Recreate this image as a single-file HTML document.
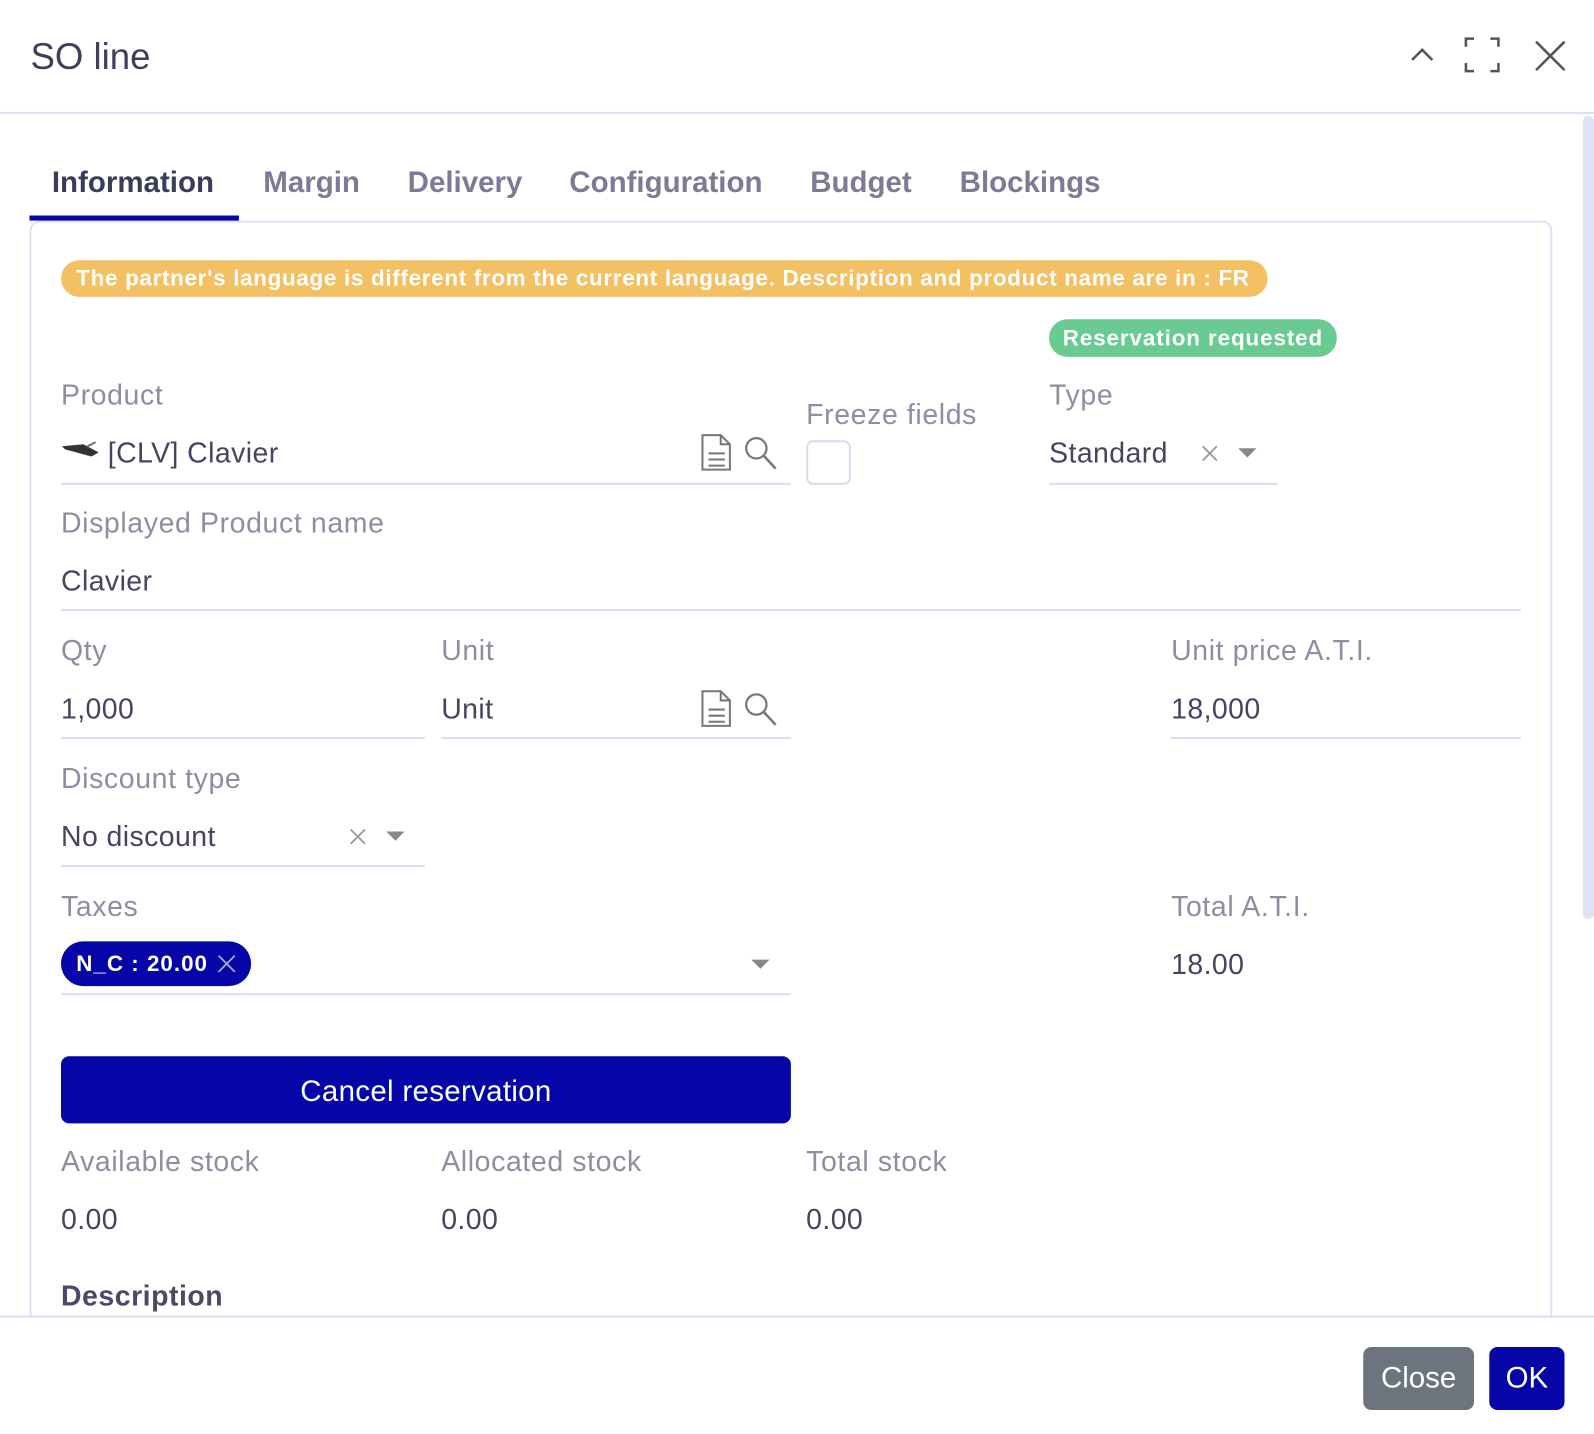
<!DOCTYPE html>
<html><head><meta charset="utf-8"><style>
*{margin:0;padding:0;box-sizing:border-box}
html,body{width:1594px;height:1434px;overflow:hidden;background:#fff}
#w{position:absolute;left:0;top:0;width:1568px;height:1411px;transform:scale(1.01658);transform-origin:0 0;font-family:"Liberation Sans",sans-serif;color:#45455f}
.a{position:absolute;white-space:nowrap;line-height:36px;height:36px}
.lbl{font-size:28px;color:#8e8ea3;letter-spacing:0.6px}
.val{font-size:28px;color:#45455f;letter-spacing:0.4px}
.tab{font-size:29px;font-weight:bold;color:#7b7b96;top:162px}
.ul{position:absolute;height:2px;background:#dcdcf2}
svg{position:absolute}
</style></head><body><div id="w">
<div class="a" style="left:30px;top:36px;font-size:36px;color:#3f3f5c;line-height:40px;height:40px">SO line</div>
<svg style="left:1386px;top:44px" width="28" height="20" viewBox="0 0 28 20"><path d="M3 15 L13 5 L23 15" fill="none" stroke="#555" stroke-width="2.5"/></svg>
<svg style="left:1440px;top:36px" width="36" height="36" viewBox="0 0 36 36"><path d="M2 10V2h8M26 2h8v8M34 26v8h-8M10 34H2v-8" fill="none" stroke="#555" stroke-width="2.5"/></svg>
<svg style="left:1508px;top:38px" width="34" height="34" viewBox="0 0 34 34"><path d="M3 3L31 31M31 3L3 31" fill="none" stroke="#555" stroke-width="2.5"/></svg>
<div style="position:absolute;left:0;top:110px;width:1568px;height:2px;background:#dedef5"></div>
<div style="position:absolute;left:1557px;top:114px;width:11px;height:790px;background:#e2e2f6;border-radius:6px"></div>

<div class="a tab" style="left:51px;color:#3b3b5a">Information</div>
<div class="a tab" style="left:259px">Margin</div>
<div class="a tab" style="left:401px">Delivery</div>
<div class="a tab" style="left:560px">Configuration</div>
<div class="a tab" style="left:797px">Budget</div>
<div class="a tab" style="left:944px">Blockings</div>
<div style="position:absolute;left:29px;top:217px;width:1498px;height:1100px;border:2px solid #e0e0f3;border-radius:10px"></div>
<div style="position:absolute;left:29px;top:212px;width:206px;height:5px;background:#0505a8"></div>

<div class="a" style="left:60px;top:256px;width:1187px;height:36px;background:#f4c064;border-radius:18px;color:#fff;font-weight:bold;font-size:22px;letter-spacing:0.7px;padding-left:15px">The partner's language is different from the current language. Description and product name are in : FR</div>
<div class="a" style="left:1032px;top:314px;width:283px;height:37px;background:#6acb92;border-radius:18px;color:#fff;font-weight:bold;font-size:22px;letter-spacing:0.9px;text-align:center;line-height:37px">Reservation requested</div>

<div class="a lbl" style="left:60px;top:371px">Product</div>
<svg style="left:60px;top:433px" width="38" height="20" viewBox="0 0 38 20"><path d="M1 6 L22 4 L37 12 L30 16 L4 9Z" fill="#333"/><path d="M26 6 L34 2" stroke="#777" stroke-width="2"/></svg>
<div class="a val" style="left:106px;top:428px">[CLV] Clavier</div>
<svg style="left:688px;top:426px" width="34" height="38" viewBox="0 0 34 38"><path d="M3 2h18l9 9v25H3z M21 2v9h9 M9 20h16M9 26h16M9 32h16" fill="none" stroke="#777" stroke-width="2"/></svg>
<svg style="left:730px;top:428px" width="36" height="36" viewBox="0 0 36 36"><circle cx="14" cy="13" r="10" fill="none" stroke="#777" stroke-width="2.2"/><path d="M21 20L33 33" stroke="#777" stroke-width="2.5"/></svg>
<div class="ul" style="left:60px;top:475px;width:718px"></div>
<div class="a lbl" style="left:793px;top:390px">Freeze fields</div>
<div style="position:absolute;left:793px;top:433px;width:44px;height:44px;border:2px solid #dcdcf0;border-radius:7px"></div>
<div class="a lbl" style="left:1032px;top:371px">Type</div>
<div class="a val" style="left:1032px;top:428px">Standard</div>
<svg style="left:1181px;top:437px" width="18" height="18" viewBox="0 0 18 18"><path d="M2 2L16 16M16 2L2 16" stroke="#999" stroke-width="1.8"/></svg>
<svg style="left:1217px;top:440px" width="20" height="12" viewBox="0 0 20 12"><path d="M1 1h18L10 10z" fill="#888"/></svg>
<div class="ul" style="left:1032px;top:475px;width:225px"></div>

<div class="a lbl" style="left:60px;top:497px">Displayed Product name</div>
<div class="a val" style="left:60px;top:554px">Clavier</div>
<div class="ul" style="left:60px;top:599px;width:1436px"></div>

<div class="a lbl" style="left:60px;top:622px">Qty</div>
<div class="a val" style="left:60px;top:680px">1,000</div>
<div class="ul" style="left:60px;top:725px;width:358px"></div>
<div class="a lbl" style="left:434px;top:622px">Unit</div>
<div class="a val" style="left:434px;top:680px">Unit</div>
<svg style="left:688px;top:678px" width="34" height="38" viewBox="0 0 34 38"><path d="M3 2h18l9 9v25H3z M21 2v9h9 M9 20h16M9 26h16M9 32h16" fill="none" stroke="#777" stroke-width="2"/></svg>
<svg style="left:730px;top:680px" width="36" height="36" viewBox="0 0 36 36"><circle cx="14" cy="13" r="10" fill="none" stroke="#777" stroke-width="2.2"/><path d="M21 20L33 33" stroke="#777" stroke-width="2.5"/></svg>
<div class="ul" style="left:434px;top:725px;width:344px"></div>
<div class="a lbl" style="left:1152px;top:622px">Unit price A.T.I.</div>
<div class="a val" style="left:1152px;top:680px">18,000</div>
<div class="ul" style="left:1152px;top:725px;width:344px"></div>

<div class="a lbl" style="left:60px;top:748px">Discount type</div>
<div class="a val" style="left:60px;top:805px">No discount</div>
<svg style="left:343px;top:814px" width="18" height="18" viewBox="0 0 18 18"><path d="M2 2L16 16M16 2L2 16" stroke="#999" stroke-width="1.8"/></svg>
<svg style="left:379px;top:817px" width="20" height="12" viewBox="0 0 20 12"><path d="M1 1h18L10 10z" fill="#888"/></svg>
<div class="ul" style="left:60px;top:851px;width:358px"></div>

<div class="a lbl" style="left:60px;top:874px">Taxes</div>
<div class="a" style="left:60px;top:926px;width:187px;height:44px;background:#0505a8;border-radius:22px;color:#fff;font-weight:bold;font-size:22px;letter-spacing:1px;line-height:44px;padding-left:15px">N_C : 20.00</div>
<svg style="left:213px;top:938px" width="20" height="20" viewBox="0 0 20 20"><path d="M2 2L18 18M18 2L2 18" stroke="#aab" stroke-width="1.8"/></svg>
<svg style="left:738px;top:943px" width="20" height="12" viewBox="0 0 20 12"><path d="M1 1h18L10 10z" fill="#888"/></svg>
<div class="ul" style="left:60px;top:977px;width:718px"></div>
<div class="a lbl" style="left:1152px;top:874px">Total A.T.I.</div>
<div class="a val" style="left:1152px;top:931px">18.00</div>

<div class="a" style="left:60px;top:1039px;width:718px;height:66px;background:#0505a8;border-radius:8px;color:#fff;font-size:29px;letter-spacing:0.3px;line-height:70px;text-align:center">Cancel reservation</div>

<div class="a lbl" style="left:60px;top:1125px">Available stock</div>
<div class="a lbl" style="left:434px;top:1125px">Allocated stock</div>
<div class="a lbl" style="left:793px;top:1125px">Total stock</div>
<div class="a val" style="left:60px;top:1182px">0.00</div>
<div class="a val" style="left:434px;top:1182px">0.00</div>
<div class="a val" style="left:793px;top:1182px">0.00</div>
<div class="a" style="left:60px;top:1257px;font-size:28px;font-weight:bold;color:#4a4a66;letter-spacing:0.5px">Description</div>

<div style="position:absolute;left:0;top:1294px;width:1568px;height:117px;background:#fff;border-top:2px solid #dedef5"></div>
<div class="a" style="left:1341px;top:1325px;width:109px;height:62px;background:#6c757d;border-radius:8px;color:#fff;font-size:29px;line-height:62px;text-align:center">Close</div>
<div class="a" style="left:1465px;top:1325px;width:74px;height:62px;background:#0505a8;border-radius:8px;color:#fff;font-size:29px;line-height:62px;text-align:center">OK</div>
</div></body></html>
